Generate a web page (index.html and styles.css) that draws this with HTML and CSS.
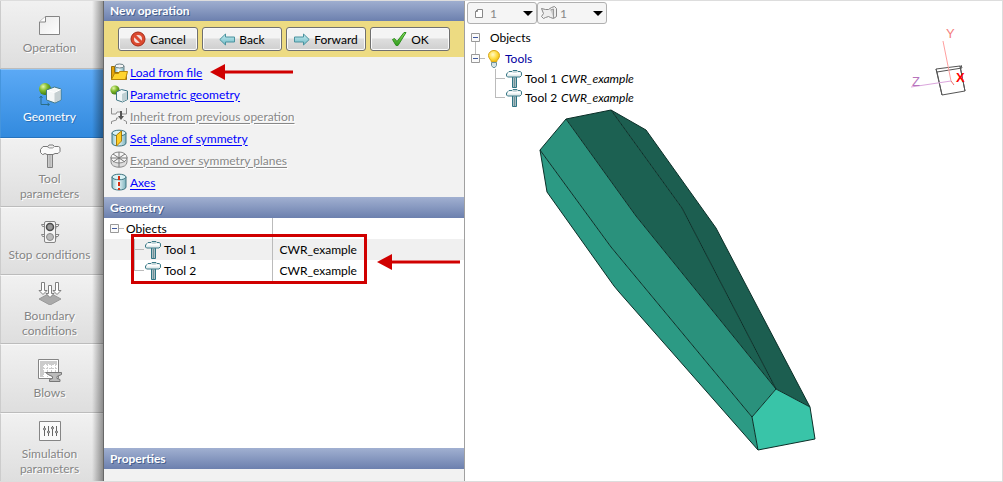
FILE: index.html
```html
<!DOCTYPE html>
<html lang="en">
<head>
<meta charset="utf-8">
<meta name="viewport" content="width=device-width, initial-scale=1">
<title>New operation</title>
<link rel="stylesheet" href="styles.css">
</head>
<body>
<svg class="sprite" aria-hidden="true">
  <defs>
    <linearGradient id="g-page" x1="0" y1="0" x2="1" y2="1"><stop offset="0" stop-color="#e9e9e9"/><stop offset="1" stop-color="#fff"/></linearGradient>
    <radialGradient id="g-green" cx=".35" cy=".3" r=".7"><stop offset="0" stop-color="#e4f7a8"/><stop offset=".5" stop-color="#7fb92c"/><stop offset="1" stop-color="#3f7a10"/></radialGradient>
    <linearGradient id="g-glass"><stop offset="0" stop-color="#8fc3cc"/><stop offset=".4" stop-color="#f3fcfd"/><stop offset="1" stop-color="#7db3bd"/></linearGradient>
    <linearGradient id="g-arrow" x1="0" y1="0" x2="0" y2="1"><stop offset="0" stop-color="#c9eef2"/><stop offset="1" stop-color="#6db9c4"/></linearGradient>
    <linearGradient id="g-check" x1="0" y1="0" x2="0" y2="1"><stop offset="0" stop-color="#8ae05a"/><stop offset="1" stop-color="#2f9a1c"/></linearGradient>
    <radialGradient id="g-bulb" cx=".4" cy=".35" r=".7"><stop offset="0" stop-color="#fff9c8"/><stop offset=".5" stop-color="#ffdf4a"/><stop offset="1" stop-color="#eeb500"/></radialGradient>
    <symbol id="hammer" viewBox="0 0 18 20">
      <path d="M7.500 7.500h4v11h-4z" fill="#a9bfc3" stroke="#2f7585"/>
      <path d="M9.500 9v9" stroke="#6f8f96"/>
      <path d="M1.500 5 4 2.500h3l1-1h4l1 1h2l1.500 1v3l-1.500 1.500H4L2.500 8l-1-1z" fill="#e3eced" stroke="#3b7a88"/>
      <path d="M3 4.500h12.500" stroke="#fff" stroke-width="2"/>
      <path d="M7.500 3.500h4l1-1h-4z" fill="#9fbcc2"/>
    </symbol>
    <symbol id="cylinder" viewBox="0 0 18 18">
      <path d="M2 4v10c0 4 14 4 14 0V4" fill="url(#g-glass)" stroke="#3e7480"/>
      <ellipse cx="9" cy="4" rx="7" ry="2.800" fill="#d9f2f5" stroke="#3e7480"/>
    </symbol>
  </defs>
</svg>

<div class="app">
  <nav class="steps" aria-label="Operation steps">
    <button class="step" type="button">
      <svg class="step-icon" viewBox="0 0 24 24"><path d="M7.500 3.500h14v18H1.500V9z" fill="url(#g-page)" stroke="#858585"/><path d="M7.500 3.500V9h-6" fill="#fff" stroke="#858585"/></svg>
      <span>Operation</span>
    </button>
    <button class="step step-active" type="button" aria-current="step">
      <svg class="step-icon" viewBox="0 0 24 24"><circle cx="7" cy="7" r="6" fill="url(#g-green)"/><path d="M3 14v8.500h8M1.500 16 3 14l1.500 2M9.500 21l2 1.500-2 1.500" fill="none" stroke="#2b6d86"/><path d="m8.500 8 8-3 6.500 2v11l-6 3-8.500-3z" fill="#f4f7f7" stroke="#427886"/><path d="m16.500 10.500 6-3v10.500l-6 2.500z" fill="#c5cfd1"/><path d="m9 8.500 7.500 2 6-3" fill="none" stroke="#fff"/></svg>
      <span>Geometry</span>
    </button>
    <button class="step" type="button">
      <svg class="step-icon" viewBox="0 0 24 24"><path d="M9.500 9.500h5v14h-5z" fill="#ccc" stroke="#808080"/><path d="M12 11v12" stroke="#aaa"/><path d="m2.500 5.500 2.500-3h5l1-1.500h4l1.500 1.500h4l1.500 1v4l-2 2h-3l-2 1h-6l-2-1-2 1H4.500l-2-2z" fill="#fafafa" stroke="#777"/><path d="m9.500 3 2 1h3l2-1.500" fill="#ddd" stroke="#999"/></svg>
      <span>Tool<br>parameters</span>
    </button>
    <button class="step" type="button">
      <svg class="step-icon" viewBox="0 0 24 24"><path d="M7 4.500H3.500l1 2H7v2M7 14.500H3.500l1 2H7v2M18 4.500h3l-1 2h-2v2M18 14.500h3l-1 2h-2v2" fill="#eee" stroke="#858585"/><rect x="6.500" y="1.500" width="11" height="21" rx="1.500" fill="#f5f5f5" stroke="#858585"/><circle cx="12" cy="7" r="3.500" fill="#999" stroke="#4c4c4c" stroke-width="1.500"/><circle cx="12" cy="17" r="3.500" fill="#bbb" stroke="#888"/></svg>
      <span>Stop conditions</span>
    </button>
    <button class="step" type="button">
      <svg class="step-icon" viewBox="0 0 24 24"><path d="m12 12 11 6-11 6-11-6z" fill="#aaa" stroke="#999"/><path d="M3.500 1.500h3v8H9l-4 4-4-4h2.500z" fill="#fff" stroke="#808080"/><path d="M17.500 1.500h3v8H23l-4 4-4-4h2.500z" fill="#fff" stroke="#808080"/><path d="M10.500 4.500h3v8H16l-4 4-4-4h2.500z" fill="#fff" stroke="#808080"/></svg>
      <span>Boundary<br>conditions</span>
    </button>
    <button class="step" type="button">
      <svg class="step-icon" viewBox="0 0 24 24"><path d="M.5 1.500h20v19H.5z" fill="#fff" stroke="#858585"/><path d="M2 3h17v3H2zM2 6h3v13H2z" fill="#ccc"/><path d="M2 6.500h17M2 10.500h17M2 14.500h17M5.500 3v16M9.500 3v16M13.500 3v16M17.500 3v16" stroke="#ccc" stroke-dasharray="2 1"/><path d="M7.500 14.500h16v2L19 18.500v2l3 1v2H11.500v-2l3-1v-2L11 17z" fill="#bbb" stroke="#777"/></svg>
      <span>Blows</span>
    </button>
    <button class="step" type="button">
      <svg class="step-icon" viewBox="0 0 24 24"><path d="M1.500 2.500h21v19h-21z" fill="#fafafa" stroke="#858585"/><path d="M6.500 7v10M10.500 7v10M14.500 7v10M18.500 7v10" stroke="#666"/><g fill="#fff" stroke="#555"><circle cx="6.500" cy="10" r="1"/><circle cx="10.500" cy="13" r="1"/><circle cx="14.500" cy="9" r="1"/><circle cx="18.500" cy="13" r="1"/></g></svg>
      <span>Simulation<br>parameters</span>
    </button>
  </nav>

  <main class="panel">
    <h1 class="bar">New operation</h1>
    <div class="toolbar">
      <button class="btn" type="button"><svg class="icon16" viewBox="0 0 16 16"><circle cx="8" cy="8" r="5.500" fill="#f5dfdc" stroke="#dc4a30" stroke-width="3"/><path d="m4 4 8 8" stroke="#dc4a30" stroke-width="3"/><circle cx="8" cy="8" r="7" fill="none" stroke="#a52a18"/></svg>Cancel</button>
      <button class="btn" type="button"><svg class="icon16" viewBox="0 0 16 16"><path d="M.8 8.500 6.500 3v3h9v5h-9v3z" fill="url(#g-arrow)" stroke="#4a929e"/></svg>Back</button>
      <button class="btn" type="button"><svg class="icon16" viewBox="0 0 16 16"><path d="M15.200 8.500 9.500 3v3h-9v5h9v3z" fill="url(#g-arrow)" stroke="#4a929e"/></svg>Forward</button>
      <button class="btn" type="button"><svg class="icon16" viewBox="0 0 16 16"><path d="m1.500 8.500 2-1 2.500 3L13 1.500h2L7 14.500H5z" fill="url(#g-check)" stroke="#2f8f20"/></svg>OK</button>
    </div>

    <ul class="actions">
      <li><svg class="icon18" viewBox="0 0 18 18"><path d="M5 3v8h9V3" fill="url(#g-glass)" stroke="#6b7f84"/><ellipse cx="9.500" cy="3" rx="4.500" ry="2" fill="#f5f5f5" stroke="#6b7f84"/><path d="M1.500 16.500v-13h3v6h12v7z" fill="#e5a40a" stroke="#98700c"/><path d="m1.500 16.500 3-6h4l1-2h8l-2 8z" fill="#ffd42e" stroke="#b7860b"/></svg><a href="#load">Load from file</a>
        <svg class="pointer pointer-load" viewBox="0 0 83 16" aria-hidden="true"><path d="M0 8 15 0v16z"/><path d="M14 6.500h69v3H14z"/></svg></li>
      <li><svg class="icon18" viewBox="0 0 18 18"><circle cx="5" cy="5" r="4.600" fill="url(#g-green)"/><path d="m6.500 7 5-2.500 6 1.500v8.500l-5 2.500-6-2z" fill="#f1f7f8" stroke="#427886"/><path d="m12 9 5-2.500v8L12 17z" fill="#bfd0d3"/></svg><a href="#parametric">Parametric geometry</a></li>
      <li><svg class="icon18" viewBox="0 0 18 18"><path d="M1.500 1v6H6l1-2h4l1 2h4.500V1z" fill="#eee" stroke="none"/><path d="M1.500 1v6H6l1-2h4l1 2h4.500V1M1.500 17v-2.500l5-1.500v-2h2M16.500 17v-2.500l-3-1.500" fill="none" stroke="#8e8e8e"/><path d="M11 4v6" stroke="#555" stroke-width="2"/><path d="M8 9h6l-3 4z" fill="#555"/></svg><a class="off" aria-disabled="true" href="#inherit">Inherit from previous operation</a></li>
      <li><svg class="icon18" viewBox="0 0 18 18"><use href="#cylinder"/><path d="m6.500 6 5-4v10l-5 5z" fill="#ffcd24" stroke="#a97d0a"/></svg><a href="#plane">Set plane of symmetry</a></li>
      <li><svg class="icon18" viewBox="0 0 18 18"><path d="M1 6v5c0 7 16 7 16 0V6" fill="#ddd" stroke="#8a8a8a"/><ellipse cx="9" cy="6.500" rx="8" ry="5.500" fill="#f6f6f6" stroke="#8a8a8a"/><path d="M9 1v15M3 11l12-8M3 3l12 8M1 7h16" stroke="#777"/></svg><a class="off" aria-disabled="true" href="#expand">Expand over symmetry planes</a></li>
      <li><svg class="icon18" viewBox="0 0 18 18"><use href="#cylinder"/><path d="M9 3v14" stroke="#d33014" stroke-width="2" stroke-dasharray="4 2"/></svg><a href="#axes">Axes</a></li>
    </ul>

    <h2 class="bar">Geometry</h2>
    <div class="objects">
      <table class="grid">
        <tbody>
          <tr><td><div class="cell"><svg class="expander" viewBox="0 0 9 9"><path d="M.5.5h8v8h-8z" fill="#fafafa" stroke="#999"/><path d="M2 4.500h5" stroke="#4059a0"/></svg><i class="dash dash-short"></i>Objects</div></td><td></td></tr>
          <tr class="alt"><td><div class="cell child"><i class="dash"></i><svg class="hammer"><use href="#hammer"/></svg>Tool 1</div></td><td>CWR_example</td></tr>
          <tr><td><div class="cell child last"><i class="dash"></i><svg class="hammer"><use href="#hammer"/></svg>Tool 2</div></td><td>CWR_example</td></tr>
        </tbody>
      </table>
      <div class="highlight"></div>
      <svg class="pointer pointer-tools" viewBox="0 0 83 16" aria-hidden="true"><path d="M0 8 15 0v16z"/><path d="M14 6.500h69v3H14z"/></svg>
    </div>

    <h2 class="bar">Properties</h2>
    <div class="properties"></div>
  </main>

  <section class="viewport" aria-label="3D view">
    <svg class="scene" viewBox="465 0 538 482" aria-hidden="true">
      <path d="m540 150 7 42 67 94 5 6 139 158-6-33-141-170z" fill="#2c9a84"/>
      <path d="m540 150 26-31 70 97 140 173-24 28-141-170z" fill="#2a917c"/>
      <path d="m566 119 45-9 71 98 94 181-140-173z" fill="#1c6152"/>
      <path d="m611 110 35 20 70 98 94 179-34-18-94-181z" fill="#1c5e50"/>
      <path d="m776 389 34 18 5 32-57 11-6-33z" fill="#39c4a8"/>
      <g class="edges">
        <path d="m540 150 7 42 67 94 5 6 139 158 57-11-5-32-94-179-70-98-35-20-45 9z"/>
        <path d="m540 150 71 97 141 170 24-28-140-173-70-97M611 110l71 98 94 181 34 18M752 417l6 33"/>
      </g>
      <g fill="none" class="cube"><path d="m936 69 24-3 5 25-23 4z"/><path d="m936 69 1 3 25-4-1-3M937 72l5 23M960 66l5 25"/></g>
      <path d="m943 41 8 40" stroke="#ff9f9f"/><path d="m951 81 3 4" stroke="#e96a6a"/>
      <path d="m911 87 40-6" stroke="#dba6dd"/>
      <text class="axis" x="946" y="38" fill="#f58080">Y</text>
      <text class="axis" x="912" y="86" fill="#b774bd">Z</text>
      <text class="axis axis-x" x="956" y="82" fill="#f00">X</text>
    </svg>
    <div class="pickers">
      <label class="picker"><svg class="icon16" viewBox="0 0 16 16"><path d="M6.500 4.500h5v8h-7v-6z" fill="#fff" stroke="#888"/><path d="M6.500 4.500v2h-2" fill="none" stroke="#888"/></svg>
        <select aria-label="Operation number"><option>1</option></select><svg class="caret" viewBox="0 0 10 5"><path d="M0 0h10L5 5z"/></svg></label>
      <label class="picker"><svg class="icon16" viewBox="0 0 16 16"><path d="m.5 3.500 4 1h3l3-2 3-1 2 2v8l-3 2-3-1-2-1-3 1-2 1-2-2 2-3z" fill="#eee" stroke="#888"/><path d="m9.500 5 3-1v9" fill="#ccc" stroke="#999"/></svg>
        <select aria-label="Blow number"><option>1</option></select><svg class="caret" viewBox="0 0 10 5"><path d="M0 0h10L5 5z"/></svg></label>
    </div>
    <ul class="tree">
      <li class="node"><svg class="expander" viewBox="0 0 9 9"><path d="M.5.5h8v8h-8z" fill="#fafafa" stroke="#999"/><path d="M2 4.500h5" stroke="#4059a0"/></svg><span class="node-root">Objects</span></li>
      <li class="node node-tools"><svg class="expander" viewBox="0 0 9 9"><path d="M.5.5h8v8h-8z" fill="#fafafa" stroke="#999"/><path d="M2 4.500h5" stroke="#4059a0"/></svg><i class="dash dash-short"></i><svg class="bulb" viewBox="0 0 14 18"><path d="M4.500 12C4 9.500 1.500 8.500 1.500 5.500a5.500 5 0 0 1 11 0c0 3-2.500 4-3 6.500z" fill="url(#g-bulb)" stroke="#d7a51a"/><path d="M4.500 12.500h5v3l-1.500 2H6l-1.500-2z" fill="#d5e2e5" stroke="#6f929a"/></svg><span class="node-name">Tools</span>
        <ul class="leaves">
          <li class="leaf"><i class="dash"></i><svg class="hammer"><use href="#hammer"/></svg>Tool 1 <em>CWR_example</em></li>
          <li class="leaf last"><i class="dash"></i><svg class="hammer"><use href="#hammer"/></svg>Tool 2 <em>CWR_example</em></li>
        </ul>
      </li>
    </ul>
  </section>
</div>
</body>
</html>
```

FILE: styles.css
```css
* { box-sizing: border-box; }
body { margin: 0; font: 12px/15px Lato, "Open Sans", sans-serif; color: #000; background: #fff; }
button, select { font: inherit; }
ul { list-style: none; margin: 0; padding: 0; }
svg { display: block; flex: none; }
.sprite { position: absolute; width: 0; height: 0; }

.app { position: relative; display: grid; grid-template-columns: 104px minmax(240px, 361px) 1fr; min-height: 100vh; }
.app::after { content: ""; position: absolute; inset: 0; border: 1px solid #ddd; border-left: 0; pointer-events: none; }

/* Step navigation */
.steps { position: relative; display: grid; grid-auto-rows: 1fr; border-right: 1px solid #686868; }
.steps::after { content: ""; position: absolute; inset: 0 0 0 auto; width: 11px; background: linear-gradient(to right, transparent, rgba(0, 0, 0, .38)); pointer-events: none; }
.step { display: flex; flex-direction: column; align-items: center; justify-content: center; gap: 3px; padding: 0 5px 0 0; border: 0; border-left: 1px solid #ccc; border-top: 1px solid #fafafa; border-bottom: 1px solid #bcbcbc; background: linear-gradient(#f1f1f1, #dedede); color: #858585; text-shadow: 1px 1px #fff; }
.step-active { border-top-color: #8cc4f8; border-bottom-color: #2673bd; border-left-color: #4595dd; background: linear-gradient(#5ba9f5, #328ade); color: #fff; text-shadow: 1px 1px #2a70b8; }
.step-icon { width: 24px; height: 24px; }

/* Operation panel */
.panel { display: flex; flex-direction: column; border-right: 1px solid #a0a0a0; background: #f2f2f2; min-width: 0; }
.bar { margin: 0; padding: 3px 6px; background: linear-gradient(#a1b0d1, #6c80ae); color: #fff; font-size: 12px; line-height: 15px; font-weight: 700; text-shadow: 1px 1px #46608f; }
.toolbar { display: flex; gap: 4px; padding: 6px 14px; background: #eddb82; }
.btn { flex: 1; display: flex; align-items: center; justify-content: center; gap: 4px; height: 24px; padding: 0; border: 1px solid #707070; border-radius: 3px; background: linear-gradient(#f4f4f4 0 45%, #dedede 50%, #cfcfcf); box-shadow: inset 0 0 0 1px #fafafa; }
.icon16 { width: 16px; height: 16px; }
.icon18 { width: 18px; height: 18px; }
.actions { padding: 4px 6px; }
.actions li { display: flex; align-items: center; gap: 2px; height: 22px; white-space: nowrap; }
.actions a { color: #00f; text-underline-offset: 2px; }
.actions .off { color: #888; text-shadow: 1px 1px #fff; }
.pointer { width: 83px; height: 16px; fill: #d00000; }
.pointer-load { margin-left: 6px; }

.objects { position: relative; flex: 1; background: #fff; }
.grid { width: 100%; border-collapse: collapse; table-layout: fixed; }
.grid td { height: 21px; padding: 0 0 0 7px; }
.grid td:first-child { width: 168px; padding: 0 0 0 6px; border-right: 1px solid #bbb; }
.alt { background: #f0f0f0; }
.cell { display: flex; align-items: center; height: 21px; }
.child { padding-left: 24px; }
.expander { width: 9px; height: 9px; }
.dash { flex: none; width: 10px; border-top: 1px solid #bbb; }
.dash-short { width: 5px; margin-right: 2px; }
.child .dash, .leaf .dash { align-self: stretch; border: 0; background: linear-gradient(#bbb, #bbb) 0 0 / 1px 100% no-repeat, linear-gradient(#bbb, #bbb) 0 50% / 10px 1px no-repeat; }
.child.last .dash, .leaf.last .dash { background-size: 1px 50%, 10px 1px; }
.hammer { width: 18px; height: 20px; margin-right: 2px; }
.highlight { position: absolute; top: 16px; left: 27px; width: 236px; height: 50px; border: 3px solid #d00000; }
.pointer-tools { position: absolute; top: 36px; left: 273px; }
.properties { height: 13px; }

/* 3D view */
.viewport { position: relative; min-width: 0; overflow: hidden; }
.scene { position: absolute; top: 0; left: 0; width: 538px; height: 482px; }
.edges { fill: none; stroke: #0b2f28; stroke-width: 1; }
.cube { stroke: #555; stroke-width: 1; }
.axis { font: 13px "Liberation Sans", sans-serif; }
.axis-x { font-weight: bold; }
.pickers { position: relative; display: flex; padding: 2px 2px 0; }
.picker { position: relative; display: flex; align-items: center; width: 70px; height: 22px; }
.picker select { width: 100%; height: 22px; padding: 0 0 0 22px; border: 1px solid #b0b0b0; border-radius: 3px; background: #f5f5f5; color: #888; appearance: none; }
.picker .icon16 { position: absolute; left: 4px; }
.caret { position: absolute; right: 4px; width: 10px; height: 5px; pointer-events: none; }
.tree { position: relative; padding: 3px 6px; white-space: nowrap; }
.node { display: flex; flex-wrap: wrap; align-items: center; line-height: 21px; }
.node-root { margin-left: 10px; }
.node-name { margin-left: 4px; color: #0000a0; }
.node-tools::before { content: ""; position: absolute; top: 18px; left: 10px; height: 12px; border-left: 1px solid #bbb; }
.bulb { width: 14px; height: 18px; }
.leaves { flex: 0 0 100%; padding-left: 24px; }
.leaf { display: flex; align-items: center; height: 19px; }
.leaf em { margin-left: 4px; }
```
